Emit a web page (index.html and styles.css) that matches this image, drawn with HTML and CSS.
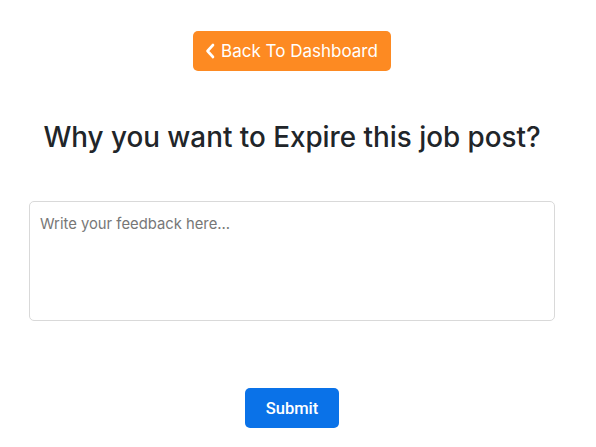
FILE: index.html
```html
<!DOCTYPE html>
<html>
<head>
<meta charset="utf-8">
<link rel="stylesheet" href="styles.css">
</head>
<body>
<div class="page">
  <div class="top">
    <a class="back-btn" href="#">
      <svg class="chev" width="10" height="16" viewBox="0 0 10 16"><path d="M8 2 L2.5 8 L8 14" fill="none" stroke="#fff" stroke-width="2.6" stroke-linecap="round" stroke-linejoin="round"/></svg>
      <span>Back To Dashboard</span>
    </a>
  </div>
  <h1 class="title">Why you want to Expire this job post?</h1>
  <div class="field">
    <textarea class="feedback" placeholder="Write your feedback here..."></textarea>
  </div>
  <div class="actions">
    <button class="submit" type="button">Submit</button>
  </div>
</div>
</body>
</html>
```
FILE: styles.css
```css
html, body {
  margin: 0;
  padding: 0;
  background: #fff;
}
.page {
  width: 584px;
  box-sizing: border-box;
  padding: 31px 29px 0;
  font-family: Inter, "Noto Sans", sans-serif;
  color: #212529;
}
.top {
  display: flex;
  justify-content: center;
}
.back-btn {
  display: flex;
  align-items: center;
  gap: 6px;
  height: 40px;
  box-sizing: border-box;
  padding: 0 13px 0 12px;
  background: #fd8a22;
  border-radius: 5px;
  color: #fff;
  text-decoration: none;
  font-size: 17px;
  font-weight: 400;
}
.chev { display: block; }
.title {
  margin: 49px 0 0;
  text-align: center;
  font-size: 27.8px;
  font-weight: 500;
  line-height: 34px;
  letter-spacing: 0;
}
.field {
  margin-top: 47px;
}
.feedback {
  display: block;
  width: 100%;
  height: 120px;
  box-sizing: border-box;
  border: 1px solid #d9d9d9;
  border-radius: 5px;
  padding: 13px 10px;
  font-family: Inter, "Noto Sans", sans-serif;
  font-size: 14.8px;
  resize: none;
  outline: none;
}
.feedback::placeholder { color: #777; }
.actions {
  display: flex;
  justify-content: center;
  margin-top: 67px;
}
.submit {
  width: 94px;
  height: 40px;
  border: none;
  border-radius: 5px;
  background: #0a72e8;
  color: #fff;
  font-family: Roboto, "Liberation Sans", Arial, sans-serif;
  font-size: 16.5px;
  font-weight: 500;
}
```
